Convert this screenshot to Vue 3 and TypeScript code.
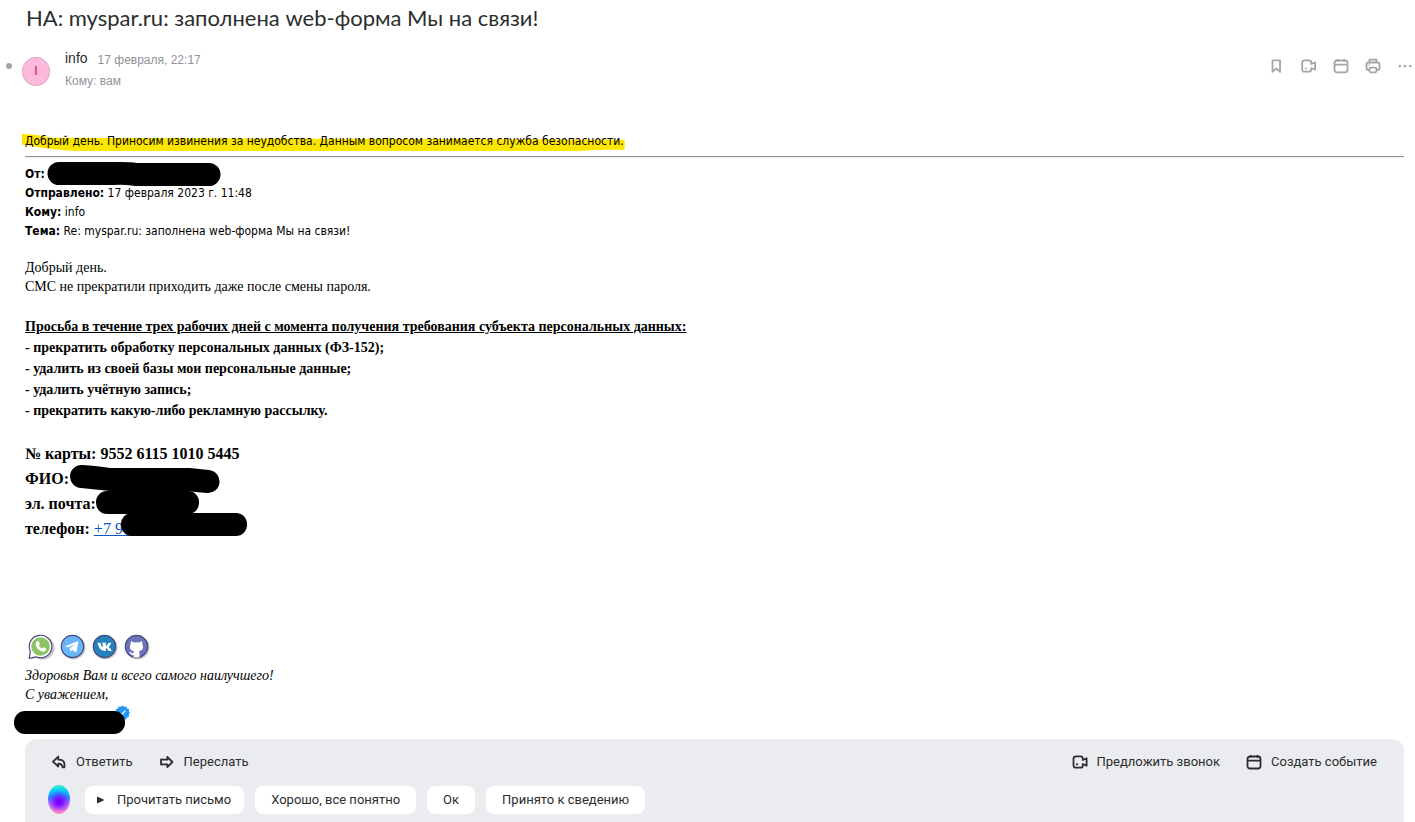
<script setup lang="ts">
interface Row {
  label: string
  value: string
}

const details: Row[] = [
  { label: 'Отправлено:', value: '17 февраля 2023 г. 11:48' },
  { label: 'Кому:', value: 'info' },
  { label: 'Тема:', value: 'Re: myspar.ru: заполнена web-форма Мы на связи!' },
]

const demands: string[] = [
  'прекратить обработку персональных данных (ФЗ-152);',
  'удалить из своей базы мои персональные данные;',
  'удалить учётную запись;',
  'прекратить какую-либо рекламную рассылку.',
]

const quickReplies: string[] = ['Хорошо, все понятно', 'Ок', 'Принято к сведению']
</script>

<template>
  <main class="letter">
    <h1 class="subject">НА: myspar.ru: заполнена web-форма Мы на связи!</h1>

    <header class="head">
      <span class="unread"></span>
      <span class="avatar">I</span>
      <div class="meta">
        <div class="meta-top">
          <span class="sender">info</span>
          <time class="date">17 февраля, 22:17</time>
        </div>
        <div class="to">Кому: вам</div>
      </div>
      <div class="tools">
        <button type="button" aria-label="Закладка">
          <svg viewBox="0 0 16 16"><path d="M3.500 2.300h7.500v11.600L7.250 10.400 3.500 13.900z" /></svg>
        </button>
        <button type="button" aria-label="Звонок">
          <svg viewBox="0 0 16 16">
            <path d="M3.700 2.300h4.300q2.300 0 2.300 2.500v1.200l3.800-1.800v7.600l-3.800-1.800v1.200q0 2.500-2.300 2.500H3.700Q1.200 13.700 1.200 11.200V4.800Q1.200 2.300 3.700 2.300z" />
            <circle class="fill" cx="4.800" cy="10.500" r="1.100" />
          </svg>
        </button>
        <button type="button" aria-label="Событие">
          <svg viewBox="0 0 16 16">
            <rect x="1.500" y="2.500" width="13" height="11.800" rx="2.500" />
            <path d="M1.500 6.700h13M4.700 1v2.500M11.300 1v2.500" />
          </svg>
        </button>
        <button type="button" aria-label="Печать">
          <svg viewBox="0 0 16 16">
            <path d="M4.500 4.500V1.700h7v2.800M4.500 12H3.500q-2 0-2-2V6.500q0-2 2-2h9q2 0 2 2V10q0 2-2 2h-1" />
            <rect x="4.500" y="9.700" width="7" height="4.600" rx="1.500" />
            <circle class="fill" cx="4.200" cy="7" r=".8" />
          </svg>
        </button>
        <button type="button" aria-label="Ещё">
          <svg viewBox="0 0 16 16">
            <circle class="fill" cx="2.800" cy="8" r="1.300" />
            <circle class="fill" cx="8" cy="8" r="1.300" />
            <circle class="fill" cx="13.200" cy="8" r="1.300" />
          </svg>
        </button>
      </div>
    </header>

    <article class="body">
      <p class="answer">
        <span class="marked">
          <svg class="marker" viewBox="0 0 584 20" preserveAspectRatio="none">
            <path d="M1 1Q14 1 30 5L583 7V18Q560 17 540 19H52Q24 17 1 12z" />
          </svg>
          <span class="marked-text">Добрый день. Приносим извинения за неудобства. Данным вопросом занимается служба безопасности.</span>
        </span>
      </p>
      <hr />
      <div class="details">
        <p class="from">
          <b>От:</b>
          <svg class="ink ink-from" viewBox="0 0 174 24">
            <path d="M12 0H72Q84 0 90 1H162A11 11 0 0 1 162 24H88Q76 22 66 23H12A11 11 0 0 1 12 0z" />
          </svg>
        </p>
        <p v-for="row in details" :key="row.label"><b>{{ row.label }}</b> {{ row.value }}</p>
      </div>

      <div class="plain">
        <p>Добрый день.</p>
        <p>СМС не прекратили приходить даже после смены пароля.</p>
      </div>

      <div class="demands">
        <p><u>Просьба в течение трех рабочих дней с момента получения требования субъекта персональных данных:</u></p>
        <p v-for="item in demands" :key="item">- {{ item }}</p>
      </div>

      <div class="person">
        <p>№ карты: 9552 6115 1010 5445</p>
        <p>
          ФИО:
          <svg class="ink ink-name" viewBox="0 0 150 29">
            <path d="M12 0Q28 1 40 3H120L139 5A11 11 0 0 1 137 28L115 26H40L11 23A11 11 0 0 1 12 0z" />
          </svg>
        </p>
        <p>
          эл. почта:
          <svg class="ink ink-mail" viewBox="0 0 103 23">
            <rect width="103" height="23" rx="11" />
          </svg>
        </p>
        <p>
          телефон: <a href="#phone">+7 9<span class="rest">00 000-00-00</span></a>
          <svg class="ink ink-phone" viewBox="0 0 126 24">
            <rect width="126" height="23" rx="11" />
          </svg>
        </p>
      </div>

      <div class="socials">
        <a href="#whatsapp" aria-label="WhatsApp">
          <svg viewBox="0 0 28 28">
            <path class="shade" d="M4 26.500L5 19A11.700 11.700 0 1 1 10 25z" />
            <path fill="#fff" stroke="#4b4a7d" stroke-width="1.200" d="M2.200 25.300L3.400 18.500A11.300 11.300 0 1 1 8.800 23.800z" />
            <circle cx="13.500" cy="13.500" r="9.300" fill="#8cc364" />
            <path fill="#fff" d="M9.500 8.500l2-.5 1.500 3-1.200 1.500q1 2 3.200 3l1.500-1.300 2.700 1.500q.2 2.500-2.700 3-3 0-5.800-2.900-3-3.500-1.200-7.300z" />
          </svg>
        </a>
        <a href="#telegram" aria-label="Telegram">
          <svg viewBox="0 0 28 28">
            <circle class="shade" cx="14.700" cy="14.700" r="11.800" />
            <circle cx="13.500" cy="13.500" r="11.200" fill="#68b5fa" stroke="#4b4a7d" stroke-width="1.200" />
            <path fill="#fff" d="M6 13.300L19.500 8 17.300 19.500l-4-2.600-2 1.900-.5-3.500 5.500-4.300-7 3.500z" />
          </svg>
        </a>
        <a href="#vk" aria-label="VK">
          <svg viewBox="0 0 28 28">
            <circle class="shade" cx="14.700" cy="14.700" r="11.800" />
            <circle cx="13.500" cy="13.500" r="11.200" fill="#2481bd" stroke="#4b4a7d" stroke-width="1.200" />
            <path fill="#fff" d="M6.500 9.700h2.700q1 3.500 2.600 4.800v-3.200l-1-1.600h4v3.500q1.600-1 2.700-3.500h2.800q-.8 2.500-2.800 4.200 2.400 1.500 3.200 4h-3q-1-2-2.900-2.800v2.800h-1.200q-5.500-.3-7.100-8.200z" />
          </svg>
        </a>
        <a href="#github" aria-label="GitHub">
          <svg viewBox="0 0 28 28">
            <circle class="shade" cx="14.700" cy="14.700" r="11.800" />
            <circle cx="13.500" cy="13.500" r="11.200" fill="#6d72bd" stroke="#4b4a7d" stroke-width="1.200" />
            <path fill="#fff" d="M8 8l3 1.500q2.500-.6 5 0L19 8l.5 3.400q1.300 3.500-.7 5.600-1 1-3 1.300.8 1 .7 2.300v3.600q-3 .7-6 0V22q-3 .3-3.800-2.300l-.9-1 1.600.3q1 1.500 3.100 1 0-1 .6-1.700-2-.3-3-1.300-2-2.100-.7-5.600z" />
          </svg>
        </a>
      </div>

      <div class="sign">
        <p>Здоровья Вам и всего самого наилучшего!</p>
        <p>С уважением,</p>
        <p>
          <svg class="badge" viewBox="0 0 16 16">
            <path fill="#2196f3" d="M8 .5l1.800 1.400L12 1.500l.9 2.100 2.100.9-.3 2.300L16 8.500l-1.400 1.800.3 2.200-2.100.9-.9 2.100-2.200-.3L8 16l-1.800-1.200-2.200.3-.9-2.100L1 12.500l.3-2.200L0 8.500l1.300-1.700L1 4.500l2.100-.9L4 1.500l2.200.4z" />
            <path fill="none" stroke="#fff" stroke-width="1.500" d="M5 8.500l2 2 4-4.500" />
          </svg>
          <svg class="ink ink-sign" viewBox="0 0 111 23">
            <rect width="111" height="23" rx="11" />
          </svg>
        </p>
      </div>
    </article>

    <footer class="panel">
      <div class="actions">
        <button type="button">
          <svg viewBox="0 0 16 16"><path d="M7.300 2.700L2 7.700l5.300 4.800v-2.800q3.500-.2 4.300 3.600h1.800V10q0-4.300-6.100-4.300z" /></svg>
          Ответить
        </button>
        <button type="button">
          <svg viewBox="0 0 16 16"><path d="M8.300 3L13.500 8l-5.200 5v-2.700H4.300L2 10.500v-5l2.300.2h4z" /></svg>
          Переслать
        </button>
        <span class="space"></span>
        <button type="button">
          <svg viewBox="0 0 16 16">
            <path d="M4 2.300h4.500q2.300 0 2.300 2.500v1.200l3.800-1.800v7.600l-3.800-1.800v1.200q0 2.500-2.300 2.500H4q-2.500 0-2.500-2.500V4.800Q1.500 2.300 4 2.300z" />
            <circle class="fill" cx="5" cy="10.300" r="1.100" />
          </svg>
          Предложить звонок
        </button>
        <button type="button">
          <svg viewBox="0 0 16 16">
            <rect x="1.500" y="2.500" width="13" height="12" rx="2.500" />
            <path d="M1.500 6.700h13M4.700 1v2.500M11.300 1v2.500" />
          </svg>
          Создать событие
        </button>
      </div>
      <div class="chips">
        <span class="orb"></span>
        <button type="button" class="read">
          <svg viewBox="0 0 8 8"><path d="M0 .5L7.500 4 0 7.500z" /></svg>
          Прочитать письмо
        </button>
        <button v-for="reply in quickReplies" :key="reply" type="button">{{ reply }}</button>
      </div>
    </footer>
  </main>
</template>

<style>
body {
  background: #fff;
}
</style>

<style scoped>
* {
  box-sizing: border-box;
}

.letter {
  display: flex;
  flex-direction: column;
  overflow: hidden;
  color: #000;
}

h1,
p {
  margin: 0;
}

svg {
  display: block;
}

button {
  padding: 0;
  border: 0;
  background: none;
  color: inherit;
  font: inherit;
  cursor: pointer;
}

.subject {
  padding: 3px 26px 1px;
  color: #2c2d2e;
  font: 400 22px/30px Lato, "Open Sans", sans-serif;
}

.head {
  display: flex;
  align-items: flex-start;
  padding: 14px 2px 0 6px;
  font: 12px/20px "Liberation Sans", sans-serif;
}

.unread {
  width: 6px;
  height: 6px;
  margin: 15px 10px 0 0;
  border-radius: 50%;
  background: #a3a5aa;
}

.avatar {
  width: 28px;
  height: 29px;
  margin: 9px 15px 0 0;
  border: 1px solid #dfa9c4;
  border-radius: 50%;
  background: #ffb9dc;
  color: #e0457b;
  font-weight: 700;
  line-height: 27px;
  text-align: center;
}

.meta {
  flex: 1;
}

.meta-top {
  display: flex;
  gap: 10px;
}

.sender {
  color: #2c2d2e;
  font-size: 14px;
}

.date,
.to {
  color: #919399;
}

.date {
  padding-top: 2px;
}

.to {
  padding-top: 1px;
}

.tools {
  display: flex;
  gap: 16px;
  padding-top: 10px;
}

.tools svg,
.actions svg {
  width: 16px;
  height: 16px;
  fill: none;
  stroke: #a3a5aa;
  stroke-width: 1.800;
  stroke-linejoin: round;
}

.tools .fill {
  fill: #a3a5aa;
  stroke: none;
}

.body {
  padding: 41px 11px 0 25px;
}

.answer,
.details {
  font: 12px/19px "DejaVu Sans Condensed", "Open Sans", sans-serif;
}

.answer {
  display: flex;
}

.marked,
.marked-text {
  position: relative;
}

.marker {
  position: absolute;
  top: 1px;
  left: -4px;
  width: calc(100% + 6px);
  height: 19px;
  fill: #ffe600;
}

hr {
  height: 2px;
  margin: 5px 0 7px;
  border: 0;
  border-top: 1px solid #949494;
  border-bottom: 1px solid #eee;
}

.ink {
  position: absolute;
  fill: #000;
}

.from,
.person p,
.sign p {
  position: relative;
}

.ink-from {
  top: -3px;
  left: 22px;
  width: 174px;
  height: 24px;
}

.plain {
  padding-top: 17px;
  font: 14px/19px "Liberation Serif", serif;
}

.demands {
  padding-top: 20px;
  font: 700 14px/21px "Liberation Serif", serif;
}

.person {
  padding-top: 20px;
  font: 700 16px/25px "Liberation Serif", serif;
}

.person a {
  color: #0857c3;
  font-weight: 400;
}

.rest {
  color: transparent;
}

.ink-name {
  top: -1px;
  left: 45px;
  width: 150px;
  height: 29px;
}

.ink-mail {
  top: 0;
  left: 71px;
  width: 103px;
  height: 23px;
}

.ink-phone {
  top: -3px;
  left: 96px;
  width: 126px;
  height: 24px;
}

.socials {
  display: flex;
  gap: 4px;
  padding: 92px 0 5px 2px;
}

.socials svg {
  width: 28px;
  height: 28px;
}

.shade {
  fill: #c9c9cc;
}

.sign {
  font: italic 14px/19px "Liberation Serif", serif;
}

.sign p {
  min-height: 19px;
}

.ink-sign {
  top: 7px;
  left: -11px;
  width: 111px;
  height: 23px;
}

.badge {
  position: absolute;
  top: 1px;
  left: 90px;
  width: 15px;
  height: 15px;
}

.panel {
  margin: 16px 11px 0 25px;
  padding: 13px 27px 8px 23px;
  border-radius: 12px 12px 0 0;
  background: #ebecef;
  color: #2c2d2e;
  font: 13px/20px Roboto, sans-serif;
}

.actions {
  display: flex;
  gap: 26px;
  padding-left: 3px;
}

.actions button {
  display: flex;
  align-items: center;
  gap: 9px;
}

.actions svg {
  stroke: #2c2d2e;
}

.actions .fill {
  fill: #2c2d2e;
  stroke: none;
}

.space {
  flex: 1;
}

.chips {
  display: flex;
  align-items: center;
  gap: 11px;
  padding-top: 13px;
}

.chips button {
  height: 28px;
  padding: 0 16px;
  border-radius: 8px;
  background: #fff;
}

.chips .read {
  display: flex;
  align-items: center;
  gap: 12px;
  padding: 0 13px 0 12px;
}

.read svg {
  width: 8px;
  height: 8px;
  fill: #2c2d2e;
}

.orb {
  width: 22px;
  height: 29px;
  margin-right: 4px;
  border-radius: 50%;
  background: radial-gradient(circle at 50% 58%, #7a00ff 0 12%, #7a00ff00 56%), linear-gradient(#3df5c4, #00c4ff 22%, #2f8cff 45%, #c07bff 65%, #ff8fc8 88%);
}
</style>
